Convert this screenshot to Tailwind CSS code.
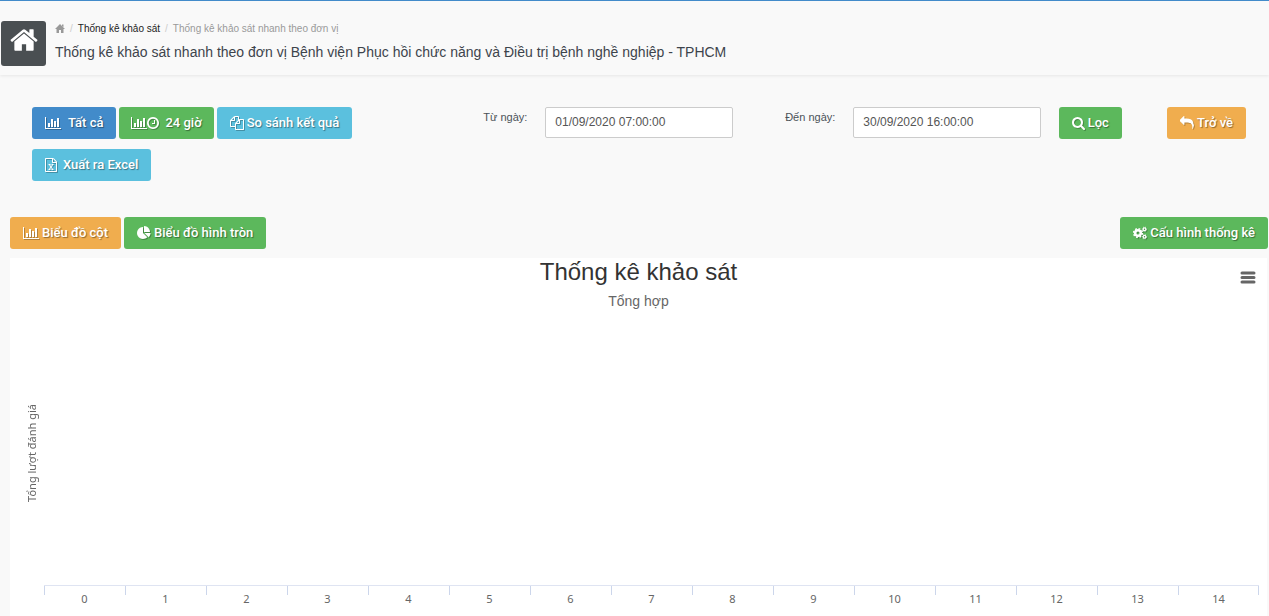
<!DOCTYPE html>
<html lang="vi">
<head>
<meta charset="utf-8">
<meta name="viewport" content="width=device-width, initial-scale=1">
<title>Thống kê khảo sát</title>
<script src="https://cdn.jsdelivr.net/npm/@tailwindcss/browser@4"></script>
</head>
<body class="flex min-h-screen flex-col bg-[#f9f9f9] font-['Liberation_Sans',Arial,sans-serif] text-[#4c5258]">
<svg class="hidden" aria-hidden="true">
  <symbol id="bar" viewBox="0 0 2048 1792"><path d="M640 896v512h-256v-512h256zM1024 384v1024h-256v-1024h256zM2048 1536v128h-2048v-1536h128v1408h1920zM1408 640v768h-256v-768h256zM1792 256v1152h-256v-1152h256z"/></symbol>
  <symbol id="home" viewBox="0 0 1664 1792"><path d="M1408 992v480q0 26-19 45t-45 19h-384v-384h-256v384h-384q-26 0-45-19t-19-45v-480q0-1 .5-3t.5-3l575-474 575 474q1 2 1 6zM1631 923l-62 74q-8 9-21 11h-3q-13 0-21-7l-692-577-692 577q-12 8-24 7-13-2-21-11l-62-74q-8-10-7-23.5t11-21.5l719-599q32-26 76-26t76 26l244 204v-195q0-14 9-23t23-9h192q14 0 23 9t9 23v408l219 182q10 8 11 21.5t-7 23.5z"/></symbol>
</svg>

<header class="flex items-start gap-[9px] border-t border-[#428bca] px-px pt-5 pb-[9px] shadow-[0_1px_3px_rgba(0,0,0,0.08)]">
  <a href="#" aria-label="Trang chủ" class="flex size-[45px] shrink-0 items-start justify-center rounded-[3px] bg-[#4a4f52] pt-1 text-white">
    <svg class="h-[30px] w-7" fill="currentColor"><use href="#home"/></svg>
  </a>
  <div>
    <nav aria-label="Breadcrumb" class="flex h-[14px] items-center gap-[5px] text-[10px] text-[#999]">
      <a href="#" aria-label="Trang chủ"><svg class="h-[9px] w-[10px]" viewBox="0 0 20 18" fill="currentColor"><path d="M10 0L20 10H17V18H12V12H8V18H3V10H0ZM14 1H17V6L14 4Z"/></svg></a>
      <span class="text-[#ccc]">/</span>
      <a href="#" class="text-[#222]">Thống kê khảo sát</a>
      <span class="text-[#ccc]">/</span>
      <span>Thống kê khảo sát nhanh theo đơn vị</span>
    </nav>
    <h1 class="mt-[7px] text-[14px] leading-5 text-[#3d444c]">Thống kê khảo sát nhanh theo đơn vị Bệnh viện Phục hồi chức năng và Điều trị bệnh nghề nghiệp - TPHCM</h1>
  </div>
</header>

<main class="flex flex-1 flex-col pt-8">
  <form class="grid grid-cols-12 pr-[14px] pl-[23px] text-[13px]">
    <div class="col-span-4 flex flex-wrap content-start gap-x-[3px] gap-y-[10px] px-[9px]">
      <button type="button" class="flex h-8 items-center rounded-[3px] bg-[#428bca] px-[13px] font-['Roboto',sans-serif] font-medium text-white text-shadow-[1px_1px_1px_rgba(0,0,0,0.4)]"><svg class="mr-[7px] h-[14px] w-4 drop-shadow-[1px_1px_0_rgba(0,0,0,0.25)]" fill="currentColor"><use href="#bar"/></svg>Tất cả</button>
      <button type="button" class="flex h-8 items-center rounded-[3px] bg-[#5cb85c] px-[12px] font-['Roboto',sans-serif] font-medium text-white text-shadow-[1px_1px_1px_rgba(0,0,0,0.4)]"><svg class="h-[14px] w-4 drop-shadow-[1px_1px_0_rgba(0,0,0,0.25)]" fill="currentColor"><use href="#bar"/></svg><svg class="mr-[6px] h-[14px] w-3 drop-shadow-[1px_1px_0_rgba(0,0,0,0.25)]" viewBox="0 0 1536 1792" fill="currentColor"><path d="M1024 544v448q0 14-9 23t-23 9h-320q-14 0-23-9t-9-23v-64q0-14 9-23t23-9h224v-352q0-14 9-23t23-9h64q14 0 23 9t9 23zM1312 896q0-148-73-273t-198-198-273-73-273 73-198 198-73 273 73 273 198 198 273 73 273-73 198-198 73-273zM1536 896q0 209-103 385.5t-279.5 279.5-385.5 103-385.5-103-279.5-279.5-103-385.5 103-385.5 279.5-279.5 385.5-103 385.5 103 279.5 279.5 103 385.5z"/></svg>24 giờ</button>
      <button type="button" class="flex h-8 items-center rounded-[3px] bg-[#5bc0de] px-[13px] font-['Roboto',sans-serif] font-medium text-white text-shadow-[1px_1px_1px_rgba(0,0,0,0.4)]"><svg class="mr-[3px] size-[14px] drop-shadow-[1px_1px_0_rgba(0,0,0,0.25)]" viewBox="0 0 1792 1792" fill="currentColor"><path d="M1696 384q40 0 68 28t28 68v1216q0 40-28 68t-68 28h-960q-40 0-68-28t-28-68v-288h-544q-40 0-68-28t-28-68v-672q0-40 20-88t48-76l408-408q28-28 76-48t88-20h416q40 0 68 28t28 68v328q68-40 128-40h416zM1152 597l-299 299h299v-299zM512 213l-299 299h299v-299zM708 860l316-316v-416h-384v416q0 40-28 68t-68 28h-416v640h512v-256q0-40 20-88t48-76zM1664 1664v-1152h-384v416q0 40-28 68t-68 28h-416v640h896z"/></svg>So sánh kết quả</button>
      <button type="button" class="flex h-8 items-center rounded-[3px] bg-[#5bc0de] px-[13px] font-['Roboto',sans-serif] font-medium text-white text-shadow-[1px_1px_1px_rgba(0,0,0,0.4)]"><svg class="mr-[6px] h-[14px] w-3 drop-shadow-[1px_1px_0_rgba(0,0,0,0.25)]" viewBox="0 0 1536 1792" fill="currentColor"><path d="M1468 380q28 28 48 76t20 88v1152q0 40-28 68t-68 28h-1344q-40 0-68-28t-28-68v-1600q0-40 28-68t68-28h896q40 0 88 20t76 48zM1024 136v376h376q-10-29-22-41l-313-313q-12-12-41-22zM1408 1664v-1024h-416q-40 0-68-28t-28-68v-416h-768v1536h1280zM429 1429v107h281v-107h-75l103-161q5-7 10-16.5t7.5-13.5 3.5-4h2q1 4 5 10 2 4 4.5 7.5t6 8 6.5 8.5l107 161h-76v107h291v-107h-68l-192-273 195-282h67v-107h-279v107h74l-103 159q-4 7-10 16.5t-9 13.5l-2 3h-2q-1-4-5-10-6-11-17-23l-106-159h76v-107h-290v107h68l189 272-194 283h-68z"/></svg>Xuất ra Excel</button>
    </div>
    <label for="from" class="px-[9px] pt-[2px] text-right text-[11px] leading-4">Từ ngày:</label>
    <div class="col-span-2 px-[9px]"><input id="from" type="text" value="01/09/2020 07:00:00" class="h-[31px] w-full rounded-[2px] border border-[#ccc] bg-white px-[9px] pb-px text-[12px] text-[#555]"></div>
    <label for="to" class="px-[9px] pt-[2px] text-right text-[11px] leading-4">Đến ngày:</label>
    <div class="col-span-2 px-[9px]"><input id="to" type="text" value="30/09/2020 16:00:00" class="h-[31px] w-full rounded-[2px] border border-[#ccc] bg-white px-[9px] pb-px text-[12px] text-[#555]"></div>
    <div class="px-[9px]"><button type="submit" class="flex h-8 items-center rounded-[3px] bg-[#5cb85c] px-[13px] font-['Roboto',sans-serif] font-medium text-white text-shadow-[1px_1px_1px_rgba(0,0,0,0.4)]"><svg class="mr-[3px] h-[14px] w-[13px] drop-shadow-[1px_1px_0_rgba(0,0,0,0.25)]" viewBox="0 0 1664 1792" fill="currentColor"><path d="M1152 832q0-185-131.5-316.5t-316.5-131.5-316.5 131.5-131.5 316.5 131.5 316.5 316.5 131.5 316.5-131.5 131.5-316.5zM1664 1664q0 52-38 90t-90 38q-54 0-90-38l-343-342q-179 124-399 124-143 0-273.5-55.5t-225-150-150-225-55.5-273.5 55.5-273.5 150-225 225-150 273.5-55.5 273.5 55.5 225 150 150 225 55.5 273.5q0 220-124 399l343 343q37 37 37 90z"/></svg>Lọc</button></div>
    <div class="flex items-start justify-end px-[9px]"><button type="button" class="flex h-8 items-center rounded-[3px] bg-[#f0ad4e] px-[13px] font-['Roboto',sans-serif] font-medium whitespace-nowrap text-white text-shadow-[1px_1px_1px_rgba(0,0,0,0.4)]"><svg class="mr-[3px] size-[14px] drop-shadow-[1px_1px_0_rgba(0,0,0,0.25)]" viewBox="0 0 1792 1792" fill="currentColor"><path d="M1792 1120q0 166-127 451-3 7-10.5 24t-13.5 30-13 22q-12 17-28 17-15 0-23.5-10t-8.5-25q0-9 2.5-26.5t2.5-23.5q5-68 5-123 0-112-19.5-200.5t-54-153.5-89-112-117-79.5-148.5-48-169-23.5-193-6.5h-224v256q0 26-19 45t-45 19-45-19l-512-512q-19-19-19-45t19-45l512-512q19-19 45-19t45 19 19 45v256h224q713 0 875 403 53 134 53 333z"/></svg>Trở về</button></div>
  </form>

  <div class="mt-9 flex gap-[3px] pr-px pl-[10px] text-[13px]">
    <button type="button" class="flex h-8 items-center rounded-[3px] bg-[#f0ad4e] px-[13px] font-['Roboto',sans-serif] font-medium text-white text-shadow-[1px_1px_1px_rgba(0,0,0,0.4)]"><svg class="mr-[3px] h-[14px] w-4 drop-shadow-[1px_1px_0_rgba(0,0,0,0.25)]" fill="currentColor"><use href="#bar"/></svg>Biểu đồ cột</button>
    <button type="button" class="flex h-8 items-center rounded-[3px] bg-[#5cb85c] px-[13px] font-['Roboto',sans-serif] font-medium text-white text-shadow-[1px_1px_1px_rgba(0,0,0,0.4)]"><svg class="mr-[3px] size-[14px] drop-shadow-[1px_1px_0_rgba(0,0,0,0.25)]" viewBox="0 0 1792 1792" fill="currentColor"><path d="M768 890l546 546q-106 108-247.5 168t-298.5 60q-209 0-385.5-103t-279.5-279.5-103-385.5 103-385.5 279.5-279.5 385.5-103v762zM955 896h773q0 157-60 298.5t-168 247.5zM1664 768h-768v-768q209 0 385.5 103t279.5 279.5 103 385.5z"/></svg>Biểu đồ hình tròn</button>
    <button type="button" class="ml-auto flex h-8 items-center rounded-[3px] bg-[#5cb85c] px-[13px] font-['Roboto',sans-serif] font-medium text-white text-shadow-[1px_1px_1px_rgba(0,0,0,0.4)]"><svg class="mr-[3px] size-[14px] drop-shadow-[1px_1px_0_rgba(0,0,0,0.25)]" viewBox="0 0 28 28" fill="none" stroke="currentColor"><circle cx="10" cy="14" r="5.6" stroke-width="5"/><circle cx="10" cy="14" r="8.8" stroke-width="3" stroke-dasharray="3.5 3.41"/><circle cx="23" cy="6.500" r="2.700" stroke-width="2.500"/><circle cx="23" cy="6.500" r="4.400" stroke-width="1.500" stroke-dasharray="2 1.950"/><circle cx="23" cy="21.500" r="2.700" stroke-width="2.500"/><circle cx="23" cy="21.500" r="4.400" stroke-width="1.500" stroke-dasharray="2 1.950"/></svg>Cấu hình thống kê</button>
  </div>

  <section class="relative mt-[9px] mr-[2px] ml-[10px] flex flex-1 flex-col bg-white">
    <h2 class="text-center text-[24px] leading-7 text-[#333]">Thống kê khảo sát</h2>
    <p class="mt-[5px] text-center text-[14px] leading-5 text-[#666]">Tổng hợp</p>
    <button type="button" aria-label="Chart menu" class="absolute top-3 right-[11px] text-[#666]"><svg class="h-4 w-4" viewBox="0 0 16 16" fill="none" stroke="currentColor" stroke-width="3" stroke-linecap="round"><path d="M2 3H14M2 7.500H14M2 12H14"/></svg></button>
    <div class="flex flex-1 items-center pt-[10px] pl-[14px]">
      <span class="rotate-180 font-['Noto_Sans',sans-serif] text-[11px] leading-4 text-[#666] [writing-mode:vertical-rl]">Tổng lượt đánh giá</span>
    </div>
    <div class="mr-2 ml-[34px] border-t border-[#dfe4f2]">
      <ol class="grid h-[30px] grid-cols-15 bg-[linear-gradient(#ccd6eb,#ccd6eb)] bg-[length:1px_9px] bg-right-top bg-no-repeat text-center font-['Noto_Sans',sans-serif] text-[11px] leading-4 text-[#666]">
        <li class="bg-[linear-gradient(#ccd6eb,#ccd6eb)] bg-[length:1px_9px] bg-no-repeat pt-[5px]">0</li>
        <li class="bg-[linear-gradient(#ccd6eb,#ccd6eb)] bg-[length:1px_9px] bg-no-repeat pt-[5px]">1</li>
        <li class="bg-[linear-gradient(#ccd6eb,#ccd6eb)] bg-[length:1px_9px] bg-no-repeat pt-[5px]">2</li>
        <li class="bg-[linear-gradient(#ccd6eb,#ccd6eb)] bg-[length:1px_9px] bg-no-repeat pt-[5px]">3</li>
        <li class="bg-[linear-gradient(#ccd6eb,#ccd6eb)] bg-[length:1px_9px] bg-no-repeat pt-[5px]">4</li>
        <li class="bg-[linear-gradient(#ccd6eb,#ccd6eb)] bg-[length:1px_9px] bg-no-repeat pt-[5px]">5</li>
        <li class="bg-[linear-gradient(#ccd6eb,#ccd6eb)] bg-[length:1px_9px] bg-no-repeat pt-[5px]">6</li>
        <li class="bg-[linear-gradient(#ccd6eb,#ccd6eb)] bg-[length:1px_9px] bg-no-repeat pt-[5px]">7</li>
        <li class="bg-[linear-gradient(#ccd6eb,#ccd6eb)] bg-[length:1px_9px] bg-no-repeat pt-[5px]">8</li>
        <li class="bg-[linear-gradient(#ccd6eb,#ccd6eb)] bg-[length:1px_9px] bg-no-repeat pt-[5px]">9</li>
        <li class="bg-[linear-gradient(#ccd6eb,#ccd6eb)] bg-[length:1px_9px] bg-no-repeat pt-[5px]">10</li>
        <li class="bg-[linear-gradient(#ccd6eb,#ccd6eb)] bg-[length:1px_9px] bg-no-repeat pt-[5px]">11</li>
        <li class="bg-[linear-gradient(#ccd6eb,#ccd6eb)] bg-[length:1px_9px] bg-no-repeat pt-[5px]">12</li>
        <li class="bg-[linear-gradient(#ccd6eb,#ccd6eb)] bg-[length:1px_9px] bg-no-repeat pt-[5px]">13</li>
        <li class="bg-[linear-gradient(#ccd6eb,#ccd6eb)] bg-[length:1px_9px] bg-no-repeat pt-[5px]">14</li>
      </ol>
    </div>
  </section>
</main>
</body>
</html>
